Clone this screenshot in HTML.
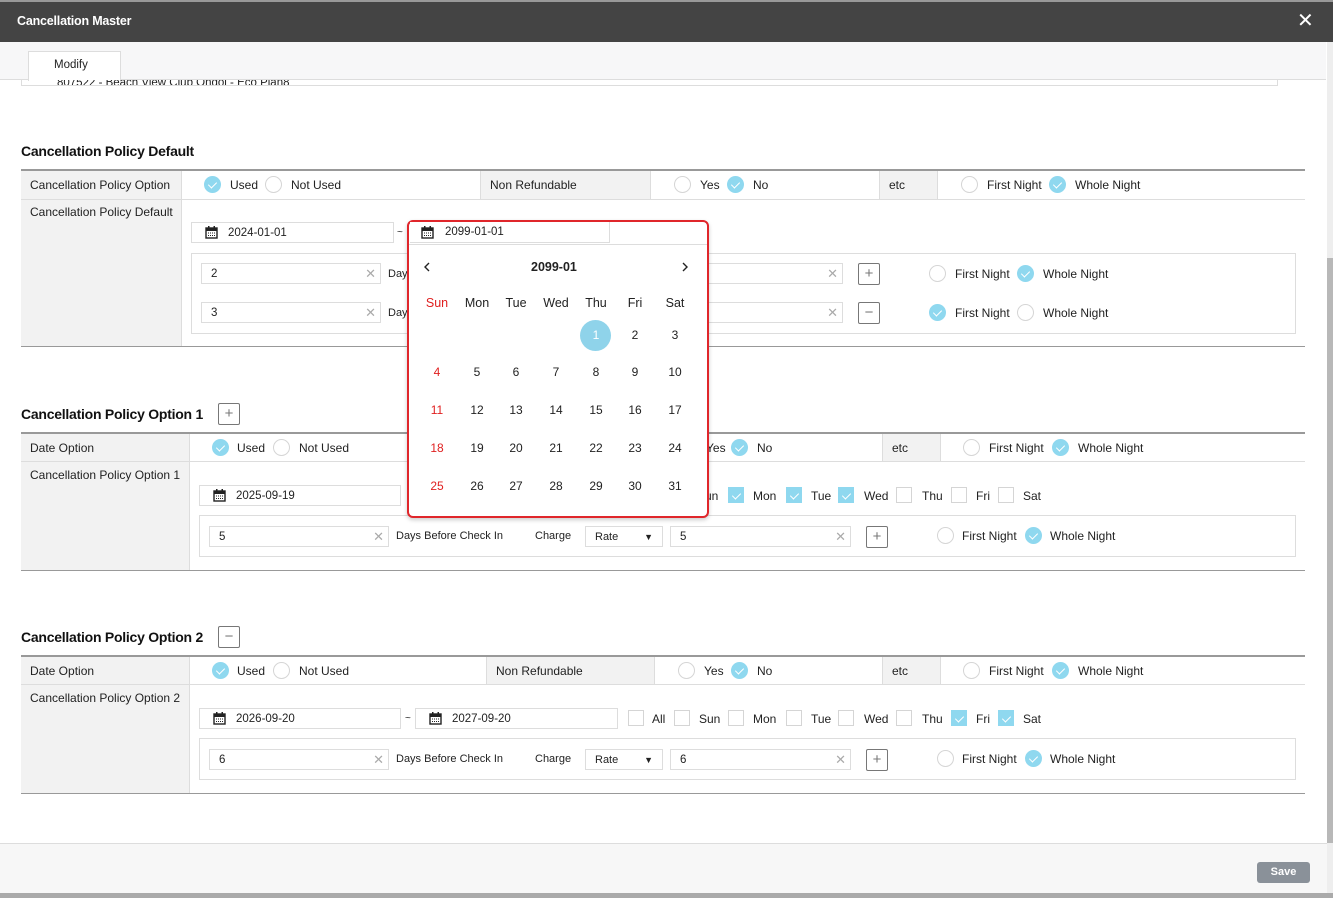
<!DOCTYPE html>
<html><head><meta charset="utf-8"><style>
*{box-sizing:border-box;margin:0;padding:0}
body{width:1333px;height:898px;overflow:hidden;background:#fff;font-family:"Liberation Sans",sans-serif;color:#222;position:relative;font-size:12px}
.a{position:absolute}
.t{position:absolute;white-space:nowrap;font-size:12px;line-height:14px}
.h{position:absolute;font-size:14px;font-weight:bold;color:#111;white-space:nowrap;letter-spacing:-0.25px}
.lbl{position:absolute;background:#f2f2f2}
.ln{position:absolute;height:1px;background:#ddd}
.ln2{position:absolute;height:2px;background:#999}
.inp{position:absolute;border:1px solid #ddd;background:#fff;height:21px;font-size:11.5px;line-height:20px;padding-left:9px}
.inp .x{position:absolute;right:4px;top:0;color:#aaa;font-size:13px}
.rc{position:absolute;width:17px;height:17px;border-radius:50%;border:1px solid #d5d5d5;background:#fff}
.rc.on{background:#8fd8ef;border-color:#8fd8ef}
.rc.on:after,.cb.on:after{content:"";position:absolute;left:5px;top:3px;width:4px;height:7px;border:solid #fff;border-width:0 1.5px 1.5px 0;transform:rotate(45deg)}
.cb{position:absolute;width:16px;height:16px;border:1px solid #d5d5d5;background:#fff}
.cb.on{background:#8fd8ef;border-color:#8fd8ef}
.btn{position:absolute;width:22px;height:22px;border:1px solid #777;border-radius:2px;background:#fff;color:#777;text-align:center;line-height:19px;font-size:15px}
.cal{position:absolute;width:13px;height:13px}
.day{position:absolute;width:30px;text-align:center;font-size:12px;line-height:14px}
</style></head><body>
<div class="a" style="left:0;top:0;width:1333px;height:2px;background:#999"></div>
<div class="a" style="left:0;top:2px;width:1333px;height:40px;background:#444"></div>
<div class="t" style="left:17px;top:14px;color:#fff;font-weight:bold;font-size:12.5px;letter-spacing:-0.2px">Cancellation Master</div>
<div class="a" style="left:1297px;top:12px;color:#fff;font-size:20px;line-height:18px">&#x2715;</div>
<div class="a" style="left:0;top:42px;width:1326px;height:38px;background:#f7f7f8"></div>
<div class="a" style="left:0;top:79px;width:1326px;height:1px;background:#ddd"></div>
<div class="a" style="left:28px;top:51px;width:93px;height:30px;background:#fff;border:1px solid #ddd;border-bottom:none"></div>
<div class="t" style="left:54px;top:58px;font-size:11.5px">Modify</div>
<div class="a" style="left:21px;top:80px;width:1257px;height:6px;border:1px solid #ddd;border-top:none;overflow:hidden">
<div class="t" style="left:35px;top:-4px;font-size:11.5px">807522 - Beach View Club Ondol - Eco Plan8</div></div>
<div class="a" style="left:1327px;top:42px;width:6px;height:851px;background:#eee"></div>
<div class="a" style="left:1327px;top:258px;width:6px;height:585px;background:#b8b8b8"></div>

<!-- Section 1 -->
<div class="h" style="left:21px;top:143px">Cancellation Policy Default</div>
<div class="ln2" style="left:21px;top:169px;width:1284px"></div>
<div class="lbl" style="left:21px;top:171px;width:160px;height:176px"></div>
<div class="a" style="left:181px;top:171px;width:1px;height:176px;background:#ddd"></div>
<div class="ln" style="left:21px;top:199px;width:1284px"></div>
<div class="ln2" style="left:21px;top:346px;width:1284px;height:1px;background:#999"></div>
<div class="t" style="left:30px;top:178px">Cancellation Policy Option</div>
<div class="rc on" style="left:204px;top:176px"></div><div class="t" style="left:230px;top:178px">Used</div>
<div class="rc" style="left:265px;top:176px"></div><div class="t" style="left:291px;top:178px">Not Used</div>
<div class="lbl" style="left:480px;top:171px;width:171px;height:28px;border-left:1px solid #ddd;border-right:1px solid #ddd"></div>
<div class="t" style="left:490px;top:178px">Non Refundable</div>
<div class="rc" style="left:674px;top:176px"></div><div class="t" style="left:700px;top:178px">Yes</div>
<div class="rc on" style="left:727px;top:176px"></div><div class="t" style="left:753px;top:178px">No</div>
<div class="lbl" style="left:879px;top:171px;width:59px;height:28px;border-left:1px solid #ddd;border-right:1px solid #ddd"></div>
<div class="t" style="left:889px;top:178px">etc</div>
<div class="rc" style="left:961px;top:176px"></div><div class="t" style="left:987px;top:178px">First Night</div>
<div class="rc on" style="left:1049px;top:176px"></div><div class="t" style="left:1075px;top:178px">Whole Night</div>
<div class="t" style="left:30px;top:205px">Cancellation Policy Default</div>
<div class="inp" style="left:191px;top:222px;width:203px;padding-left:36px">2024-01-01</div>
<div class="t" style="left:397px;top:226px;font-size:10px">~</div>
<div class="a" style="left:191px;top:253px;width:1105px;height:81px;border:1px solid #ddd"></div>
<div class="inp" style="left:201px;top:263px;width:180px">2<span class="x">&#x2715;</span></div>
<div class="t" style="left:388px;top:267px;font-size:11px">Day</div>
<div class="inp" style="left:201px;top:302px;width:180px">3<span class="x">&#x2715;</span></div>
<div class="t" style="left:388px;top:306px;font-size:11px">Day</div>
<div class="inp" style="left:700px;top:263px;width:143px"><span class="x">&#x2715;</span></div>
<div class="inp" style="left:700px;top:302px;width:143px"><span class="x">&#x2715;</span></div>
<div class="btn" style="left:858px;top:263px">+</div>
<div class="btn" style="left:858px;top:302px">&minus;</div>
<div class="rc" style="left:929px;top:265px"></div><div class="t" style="left:955px;top:267px">First Night</div>
<div class="rc on" style="left:1017px;top:265px"></div><div class="t" style="left:1043px;top:267px">Whole Night</div>
<div class="rc on" style="left:929px;top:304px"></div><div class="t" style="left:955px;top:306px">First Night</div>
<div class="rc" style="left:1017px;top:304px"></div><div class="t" style="left:1043px;top:306px">Whole Night</div>

<!-- Section 2 -->
<div class="h" style="left:21px;top:406px">Cancellation Policy Option 1</div>
<div class="btn" style="left:218px;top:403px">+</div>
<div class="ln2" style="left:21px;top:432px;width:1284px"></div>
<div class="lbl" style="left:21px;top:434px;width:168px;height:136px"></div>
<div class="a" style="left:189px;top:434px;width:1px;height:136px;background:#ddd"></div>
<div class="ln" style="left:21px;top:461px;width:1284px"></div>
<div class="a" style="left:21px;top:570px;width:1284px;height:1px;background:#999"></div>
<div class="t" style="left:30px;top:441px">Date Option</div>
<div class="rc on" style="left:212px;top:439px"></div><div class="t" style="left:237px;top:441px">Used</div>
<div class="rc" style="left:273px;top:439px"></div><div class="t" style="left:299px;top:441px">Not Used</div>
<div class="t" style="left:706px;top:441px">Yes</div>
<div class="rc on" style="left:731px;top:439px"></div><div class="t" style="left:757px;top:441px">No</div>
<div class="lbl" style="left:882px;top:434px;width:59px;height:27px;border-left:1px solid #ddd;border-right:1px solid #ddd"></div>
<div class="t" style="left:892px;top:441px">etc</div>
<div class="rc" style="left:963px;top:439px"></div><div class="t" style="left:989px;top:441px">First Night</div>
<div class="rc on" style="left:1052px;top:439px"></div><div class="t" style="left:1078px;top:441px">Whole Night</div>
<div class="t" style="left:30px;top:468px">Cancellation Policy Option 1</div>
<div class="inp" style="left:199px;top:485px;width:202px;padding-left:36px">2025-09-19</div>
<svg class="cal" style="left:213px;top:489px" viewBox="0 0 13 13"><rect x="1" y="2" width="11" height="10" fill="none" stroke="#222" stroke-width="1.4"/><rect x="1" y="2" width="11" height="3" fill="#222"/><rect x="3" y="0" width="1.5" height="3" fill="#222"/><rect x="8.5" y="0" width="1.5" height="3" fill="#222"/><path d="M3 7h7M3 9.5h7" stroke="#222" stroke-dasharray="1 1"/></svg>
<div class="t" style="left:705px;top:489px">un</div>
<div class="cb on" style="left:728px;top:487px"></div><div class="t" style="left:753px;top:489px">Mon</div>
<div class="cb on" style="left:786px;top:487px"></div><div class="t" style="left:811px;top:489px">Tue</div>
<div class="cb on" style="left:838px;top:487px"></div><div class="t" style="left:864px;top:489px">Wed</div>
<div class="cb" style="left:896px;top:487px"></div><div class="t" style="left:922px;top:489px">Thu</div>
<div class="cb" style="left:951px;top:487px"></div><div class="t" style="left:976px;top:489px">Fri</div>
<div class="cb" style="left:998px;top:487px"></div><div class="t" style="left:1023px;top:489px">Sat</div>
<div class="a" style="left:199px;top:515px;width:1097px;height:42px;border:1px solid #ddd"></div>
<div class="inp" style="left:209px;top:526px;width:180px">5<span class="x">&#x2715;</span></div>
<div class="t" style="left:396px;top:529px;font-size:11px">Days Before Check In</div>
<div class="t" style="left:535px;top:529px;font-size:11px">Charge</div>
<div class="inp" style="left:585px;top:526px;width:78px;font-size:11px">Rate<span class="a" style="right:9px;top:0;font-size:9px">&#9660;</span></div>
<div class="inp" style="left:670px;top:526px;width:181px">5<span class="x">&#x2715;</span></div>
<div class="btn" style="left:866px;top:526px">+</div>
<div class="rc" style="left:937px;top:527px"></div><div class="t" style="left:962px;top:529px">First Night</div>
<div class="rc on" style="left:1025px;top:527px"></div><div class="t" style="left:1050px;top:529px">Whole Night</div>

<!-- Section 3 -->
<div class="h" style="left:21px;top:629px">Cancellation Policy Option 2</div>
<div class="btn" style="left:218px;top:626px">&minus;</div>
<div class="ln2" style="left:21px;top:655px;width:1284px"></div>
<div class="lbl" style="left:21px;top:657px;width:168px;height:136px"></div>
<div class="a" style="left:189px;top:657px;width:1px;height:136px;background:#ddd"></div>
<div class="ln" style="left:21px;top:684px;width:1284px"></div>
<div class="a" style="left:21px;top:793px;width:1284px;height:1px;background:#999"></div>
<div class="t" style="left:30px;top:664px">Date Option</div>
<div class="rc on" style="left:212px;top:662px"></div><div class="t" style="left:237px;top:664px">Used</div>
<div class="rc" style="left:273px;top:662px"></div><div class="t" style="left:299px;top:664px">Not Used</div>
<div class="lbl" style="left:486px;top:657px;width:169px;height:27px;border-left:1px solid #ddd;border-right:1px solid #ddd"></div>
<div class="t" style="left:496px;top:664px">Non Refundable</div>
<div class="rc" style="left:678px;top:662px"></div><div class="t" style="left:704px;top:664px">Yes</div>
<div class="rc on" style="left:731px;top:662px"></div><div class="t" style="left:757px;top:664px">No</div>
<div class="lbl" style="left:882px;top:657px;width:59px;height:27px;border-left:1px solid #ddd;border-right:1px solid #ddd"></div>
<div class="t" style="left:892px;top:664px">etc</div>
<div class="rc" style="left:963px;top:662px"></div><div class="t" style="left:989px;top:664px">First Night</div>
<div class="rc on" style="left:1052px;top:662px"></div><div class="t" style="left:1078px;top:664px">Whole Night</div>
<div class="t" style="left:30px;top:691px">Cancellation Policy Option 2</div>
<div class="inp" style="left:199px;top:708px;width:202px;padding-left:36px">2026-09-20</div>
<svg class="cal" style="left:213px;top:712px" viewBox="0 0 13 13"><rect x="1" y="2" width="11" height="10" fill="none" stroke="#222" stroke-width="1.4"/><rect x="1" y="2" width="11" height="3" fill="#222"/><rect x="3" y="0" width="1.5" height="3" fill="#222"/><rect x="8.5" y="0" width="1.5" height="3" fill="#222"/><path d="M3 7h7M3 9.5h7" stroke="#222" stroke-dasharray="1 1"/></svg>
<div class="t" style="left:405px;top:712px;font-size:10px">~</div>
<div class="inp" style="left:415px;top:708px;width:203px;padding-left:36px">2027-09-20</div>
<svg class="cal" style="left:429px;top:712px" viewBox="0 0 13 13"><rect x="1" y="2" width="11" height="10" fill="none" stroke="#222" stroke-width="1.4"/><rect x="1" y="2" width="11" height="3" fill="#222"/><rect x="3" y="0" width="1.5" height="3" fill="#222"/><rect x="8.5" y="0" width="1.5" height="3" fill="#222"/><path d="M3 7h7M3 9.5h7" stroke="#222" stroke-dasharray="1 1"/></svg>
<div class="cb" style="left:628px;top:710px"></div><div class="t" style="left:652px;top:712px">All</div>
<div class="cb" style="left:674px;top:710px"></div><div class="t" style="left:699px;top:712px">Sun</div>
<div class="cb" style="left:728px;top:710px"></div><div class="t" style="left:753px;top:712px">Mon</div>
<div class="cb" style="left:786px;top:710px"></div><div class="t" style="left:811px;top:712px">Tue</div>
<div class="cb" style="left:838px;top:710px"></div><div class="t" style="left:864px;top:712px">Wed</div>
<div class="cb" style="left:896px;top:710px"></div><div class="t" style="left:922px;top:712px">Thu</div>
<div class="cb on" style="left:951px;top:710px"></div><div class="t" style="left:976px;top:712px">Fri</div>
<div class="cb on" style="left:998px;top:710px"></div><div class="t" style="left:1023px;top:712px">Sat</div>
<div class="a" style="left:199px;top:738px;width:1097px;height:42px;border:1px solid #ddd"></div>
<div class="inp" style="left:209px;top:749px;width:180px">6<span class="x">&#x2715;</span></div>
<div class="t" style="left:396px;top:752px;font-size:11px">Days Before Check In</div>
<div class="t" style="left:535px;top:752px;font-size:11px">Charge</div>
<div class="inp" style="left:585px;top:749px;width:78px;font-size:11px">Rate<span class="a" style="right:9px;top:0;font-size:9px">&#9660;</span></div>
<div class="inp" style="left:670px;top:749px;width:181px">6<span class="x">&#x2715;</span></div>
<div class="btn" style="left:866px;top:749px">+</div>
<div class="rc" style="left:937px;top:750px"></div><div class="t" style="left:962px;top:752px">First Night</div>
<div class="rc on" style="left:1025px;top:750px"></div><div class="t" style="left:1050px;top:752px">Whole Night</div>

<!-- Footer -->
<div class="a" style="left:0;top:843px;width:1327px;height:50px;background:#f7f7f7;border-top:1px solid #ddd"></div>
<div class="a" style="left:1257px;top:862px;width:53px;height:21px;background:#8a9199;border-radius:3px;color:#fff;font-size:11px;text-align:center;line-height:21px;font-weight:bold">Save</div>
<div class="a" style="left:0;top:893px;width:1333px;height:5px;background:#aaa"></div>

<!-- Calendar popup -->
<div class="a" style="left:407px;top:220px;width:302px;height:298px;border:2px solid #e0262b;border-radius:6px;background:#fff;box-shadow:0 2px 4px rgba(0,0,0,.2)"></div>
<div class="a" style="left:409px;top:244px;width:298px;height:1px;background:#ddd"></div>
<div class="inp" style="left:410px;top:222px;width:200px;padding-left:35px;border-top:none;border-left:none">2099-01-01</div>
<svg class="cal" style="left:205px;top:226px" viewBox="0 0 13 13"><rect x="1" y="2" width="11" height="10" fill="none" stroke="#222" stroke-width="1.4"/><rect x="1" y="2" width="11" height="3" fill="#222"/><rect x="3" y="0" width="1.5" height="3" fill="#222"/><rect x="8.5" y="0" width="1.5" height="3" fill="#222"/><path d="M3 7h7M3 9.5h7" stroke="#222" stroke-dasharray="1 1"/></svg>
<svg class="cal" style="left:421px;top:226px" viewBox="0 0 13 13"><rect x="1" y="2" width="11" height="10" fill="none" stroke="#222" stroke-width="1.4"/><rect x="1" y="2" width="11" height="3" fill="#222"/><rect x="3" y="0" width="1.5" height="3" fill="#222"/><rect x="8.5" y="0" width="1.5" height="3" fill="#222"/><path d="M3 7h7M3 9.5h7" stroke="#222" stroke-dasharray="1 1"/></svg>
<svg class="a" style="left:423px;top:262px" width="8" height="10" viewBox="0 0 8 10"><path d="M6 1L2 5l4 4" fill="none" stroke="#222" stroke-width="1.4"/></svg>
<svg class="a" style="left:681px;top:262px" width="8" height="10" viewBox="0 0 8 10"><path d="M2 1l4 4-4 4" fill="none" stroke="#222" stroke-width="1.4"/></svg>
<div class="t" style="left:531px;top:260px;font-weight:bold;font-size:12.5px">2099-01</div>
<div class="day" style="left:422px;top:296px;color:#e02020;font-size:12.5px">Sun</div>
<div class="day" style="left:462px;top:296px;font-size:12.5px">Mon</div>
<div class="day" style="left:501px;top:296px;font-size:12.5px">Tue</div>
<div class="day" style="left:541px;top:296px;font-size:12.5px">Wed</div>
<div class="day" style="left:581px;top:296px;font-size:12.5px">Thu</div>
<div class="day" style="left:620px;top:296px;font-size:12.5px">Fri</div>
<div class="day" style="left:660px;top:296px;font-size:12.5px">Sat</div>
<div class="a" style="left:580px;top:320px;width:31px;height:31px;border-radius:50%;background:#8fd3ea"></div>
<div class="day" style="left:581px;top:328px;color:#fff">1</div>
<div class="day" style="left:620px;top:328px">2</div>
<div class="day" style="left:660px;top:328px">3</div>
<div class="day" style="left:422px;top:365px;color:#e02020">4</div><div class="day" style="left:462px;top:365px">5</div><div class="day" style="left:501px;top:365px">6</div><div class="day" style="left:541px;top:365px">7</div><div class="day" style="left:581px;top:365px">8</div><div class="day" style="left:620px;top:365px">9</div><div class="day" style="left:660px;top:365px">10</div>
<div class="day" style="left:422px;top:403px;color:#e02020">11</div><div class="day" style="left:462px;top:403px">12</div><div class="day" style="left:501px;top:403px">13</div><div class="day" style="left:541px;top:403px">14</div><div class="day" style="left:581px;top:403px">15</div><div class="day" style="left:620px;top:403px">16</div><div class="day" style="left:660px;top:403px">17</div>
<div class="day" style="left:422px;top:441px;color:#e02020">18</div><div class="day" style="left:462px;top:441px">19</div><div class="day" style="left:501px;top:441px">20</div><div class="day" style="left:541px;top:441px">21</div><div class="day" style="left:581px;top:441px">22</div><div class="day" style="left:620px;top:441px">23</div><div class="day" style="left:660px;top:441px">24</div>
<div class="day" style="left:422px;top:479px;color:#e02020">25</div><div class="day" style="left:462px;top:479px">26</div><div class="day" style="left:501px;top:479px">27</div><div class="day" style="left:541px;top:479px">28</div><div class="day" style="left:581px;top:479px">29</div><div class="day" style="left:620px;top:479px">30</div><div class="day" style="left:660px;top:479px">31</div>
</body></html>
